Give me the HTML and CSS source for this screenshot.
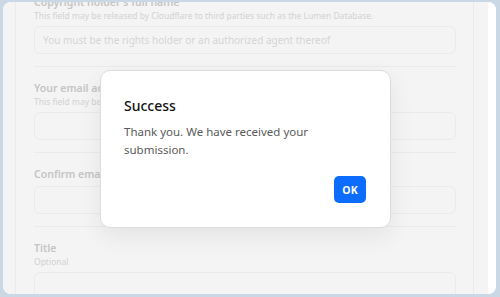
FILE: index.html
```html
<!DOCTYPE html>
<html lang="en">
<head>
<meta charset="utf-8">
<title>Success</title>
<link rel="stylesheet" href="styles.css">
</head>
<body>
<div class="page">
  <div class="backdrop">
    <div class="card">
      <form class="form">
        <div class="field">
          <div class="label">Copyright holder's full name</div>
          <div class="help">This field may be released by Cloudflare to third parties such as the Lumen Database.</div>
          <input class="input" type="text" placeholder="You must be the rights holder or an authorized agent thereof">
        </div>
        <div class="field">
          <div class="label">Your email address</div>
          <div class="help">This field may be released by Cloudflare to third parties such as the Lumen Database.</div>
          <input class="input" type="text">
        </div>
        <div class="field">
          <div class="label">Confirm email address</div>
          <input class="input" type="text">
        </div>
        <div class="field">
          <div class="label">Title</div>
          <div class="help">Optional</div>
          <input class="input" type="text">
        </div>
      </form>
    </div>
  </div>
  <div class="scroll"></div>
</div>
<div class="modal" role="dialog">
  <h2 class="modal-title">Success</h2>
  <p class="modal-body">Thank you. We have received your submission.</p>
  <div class="modal-footer"><button class="btn" type="button">OK</button></div>
</div>
</body>
</html>
```
FILE: styles.css
```css
* { box-sizing: border-box; }
html, body { margin: 0; }
body {
  width: 500px;
  height: 297px;
  overflow: hidden;
  background: #cad7e5;
  padding: 2px 4px 3px 3px;
  font-family: "Noto Sans", "Open Sans", sans-serif;
  position: relative;
}
.page {
  display: flex;
  height: 292px;
  border-radius: 8px;
  overflow: hidden;
  background: #ffffff;
}
.backdrop {
  flex: 1;
  background: #f4f4f4;
  padding: 0 14px 0 12px;
  display: flex;
}
.card {
  flex: 1;
  border-left: 1px solid #ebebeb;
  border-right: 1px solid #ebebeb;
  padding: 0 17px 0 18px;
}
.form { margin-top: -21px; }
.field {
  padding: 13px 0 12px;
  border-bottom: 1px solid #ebebeb;
  display: flex;
  flex-direction: column;
}
.label {
  font-size: 10.5px;
  font-weight: 600;
  line-height: 16px;
  color: #c5c5c5;
}
.help {
  font-size: 8.5px;
  line-height: 12px;
  color: #d2d2d2;
}
.input {
  margin-top: 4px;
  height: 28px;
  border: 1px solid #ebebeb;
  border-radius: 6px;
  background: #f4f4f4;
  padding: 0 8px;
  font-family: inherit;
  font-size: 10px;
  outline: none;
}
.input::placeholder { color: #d4d4d4; }
.scroll { width: 8px; background: #ffffff; }
.modal {
  position: absolute;
  left: 100px;
  top: 70px;
  width: 291px;
  height: 158px;
  background: #ffffff;
  border: 1px solid #dcdcdc;
  border-radius: 10px;
  box-shadow: 0 8px 24px rgba(0, 0, 0, 0.07);
  padding: 25px 24px 24px 23px;
  display: flex;
  flex-direction: column;
}
.modal-title {
  margin: 0;
  font-size: 14px;
  line-height: 20px;
  font-weight: 500;
  color: #111111;
}
.modal-body {
  margin: 7px 0 0;
  font-size: 11.5px;
  line-height: 18px;
  color: #5a5a5a;
  max-width: 235px;
}
.modal-footer {
  margin-top: auto;
  display: flex;
  justify-content: flex-end;
}
.btn {
  width: 32px;
  height: 27px;
  border: 0;
  border-radius: 5px;
  background: #0b6cfd;
  color: #ffffff;
  font-family: inherit;
  font-size: 10.5px;
  font-weight: 700;
  padding: 0;
}
```
